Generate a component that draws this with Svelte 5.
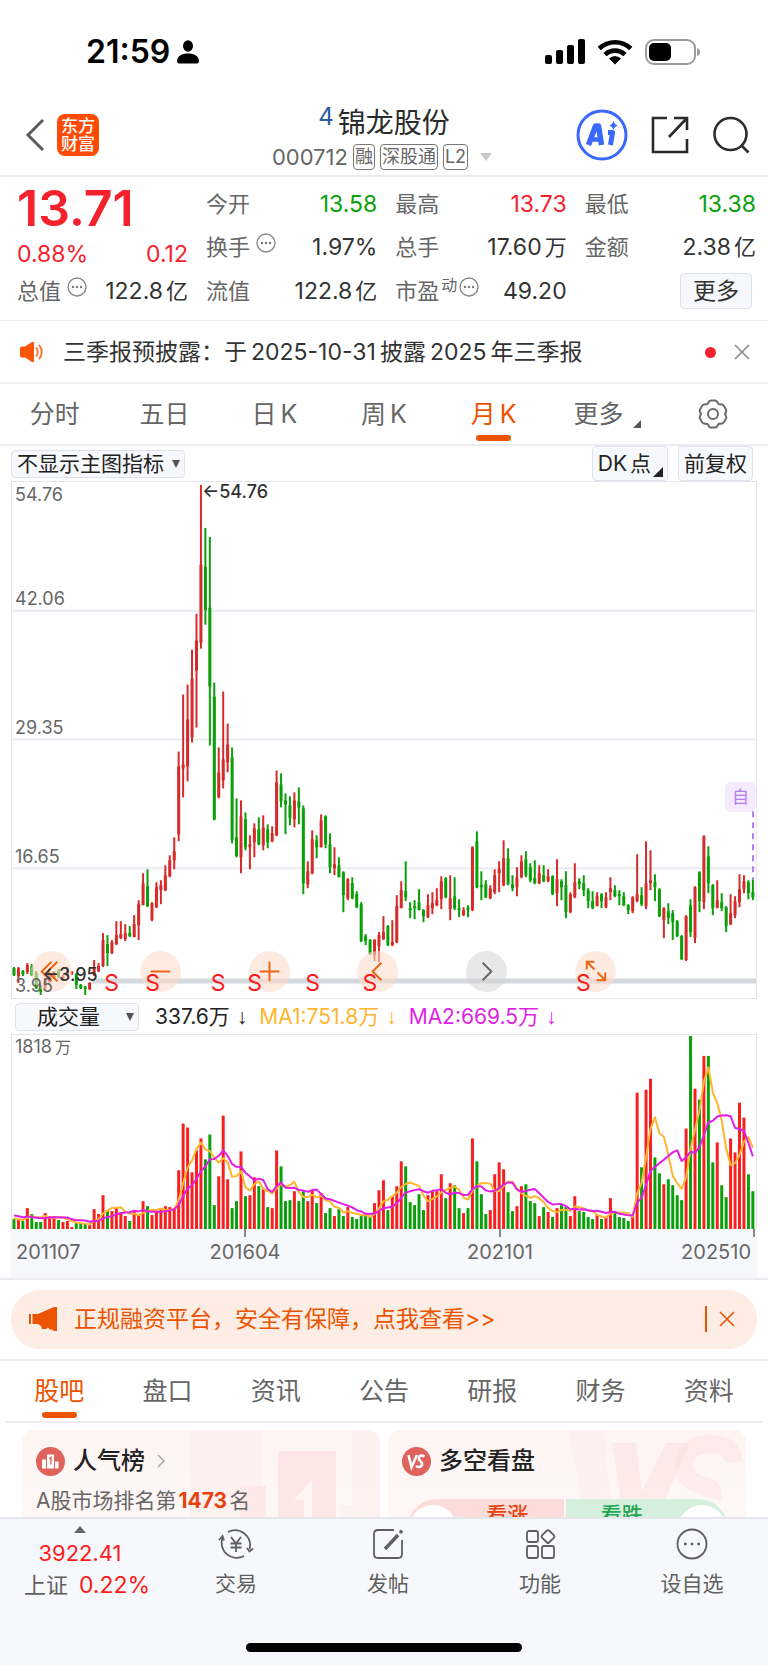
<script>
    /* quote */

    const quotes = [
        { label: '今开', value: '13.58', tone: 'down' },
        { label: '最高', value: '13.73', tone: 'up' },
        { label: '最低', value: '13.38', tone: 'down' },
        { label: '换手', value: '1.97%', tip: true },
        { label: '总手', value: '17.60', unit: '万' },
        { label: '金额', value: '2.38', unit: '亿' },
        { label: '流值', value: '122.8', unit: '亿' },
        { label: '市盈', sup: '动', value: '49.20', tip: true },
    ];

    const periods = ['分时', '五日', '日K', '周K', '月K', '更多'];
    let period = '月K';

    const sections = ['股吧', '盘口', '资讯', '公告', '研报', '财务', '资料'];
    let section = '股吧';

    /* chart data: up, high, low, body top, body bottom, volume */

    const candles = [
        [0,486,495,487,494,10],[1,486,502,487,495,9],[0,489,495,490,493,8],[1,482,493,484,491,21],
        [0,483,495,485,494,15],[0,490,508,492,507,7],[0,504,514,505,511,7],[1,497,508,498,507,16],
        [1,492,502,493,500,13],[1,490,498,491,497,13],[0,488,497,489,496,9],[1,494,500,495,499,7],
        [1,486,495,488,494,8],[1,490,494,491,493,2],[0,492,508,493,504,6],[0,503,508,504,507,6],
        [0,505,514,506,508,5],[1,501,509,502,508,4],[1,479,495,488,494,20],[1,482,491,485,490,15],
        [1,452,486,459,485,34],[0,454,485,463,472,19],[1,459,473,461,472,18],[1,440,464,454,463,21],
        [1,440,458,453,457,17],[1,443,460,452,458,13],[0,445,456,452,455,8],[1,434,456,443,456,18],
        [1,419,459,423,444,14],[1,392,424,402,424,28],[0,388,426,405,425,23],[1,421,440,422,439,14],
        [1,401,427,406,426,17],[1,399,423,404,409,20],[1,384,410,394,409,23],[1,374,396,379,395,22],
        [1,356,388,370,379,20],[1,270,360,285,353,59],[1,213,316,283,287,106],[1,203,300,238,285,102],
        [1,168,261,197,256,57],[1,132,246,159,189,79],[1,3,167,83,161,91],[0,46,143,85,128,70],
        [0,55,264,126,205,95],[0,201,339,215,338,24],[1,266,317,291,316,53],[1,210,307,278,299,114],
        [1,242,291,263,281,50],[0,266,362,276,359,21],[0,317,376,356,375,28],[1,319,392,335,376,78],
        [0,331,369,338,366,33],[1,354,388,363,366,34],[1,342,376,347,361,52],[0,336,364,348,363,43],
        [1,334,369,346,364,40],[0,343,367,348,361,22],[1,345,361,352,360,21],[1,289,355,301,354,79],
        [0,292,326,303,320,63],[0,312,353,319,323,28],[0,315,344,324,337,29],[1,311,346,319,338,38],
        [0,306,343,320,326,28],[0,324,413,327,402,38],[1,380,407,390,403,28],[1,349,393,358,392,39],
        [0,354,377,359,366,26],[1,333,366,339,366,36],[0,334,367,335,363,16],[0,352,392,363,386,21],
        [1,366,394,383,387,13],[0,376,396,384,396,20],[0,390,431,391,414,13],[1,397,419,398,417,22],
        [0,396,418,402,417,12],[0,410,427,413,426,10],[0,421,461,423,460,13],[0,453,464,455,460,13],
        [0,458,474,459,473,13],[1,458,480,459,474,26],[1,451,481,454,465,39],[1,435,459,451,458,49],
        [0,444,465,445,464,19],[1,439,465,461,464,33],[1,414,462,425,461,43],[1,400,427,409,427,68],
        [0,380,420,410,416,63],[0,421,437,427,429,27],[0,419,438,425,427,24],[0,408,429,421,429,35],
        [0,428,441,429,435,19],[1,413,437,424,436,34],[1,411,433,422,427,38],[1,407,425,419,424,38],
        [1,395,428,400,418,55],[0,396,417,397,416,31],[1,394,439,417,428,46],[0,396,429,415,427,44],
        [0,418,436,427,429,21],[1,426,435,429,434,16],[0,424,436,426,429,21],[1,365,430,366,429,91],
        [0,350,407,360,406,68],[0,390,419,404,406,35],[0,399,417,403,416,15],[1,404,418,407,417,19],
        [1,388,413,394,411,55],[1,380,411,388,392,67],[1,359,405,377,404,60],[0,367,404,377,403,37],
        [0,394,410,403,407,18],[1,386,415,396,406,23],[1,374,397,380,396,43],[0,370,396,378,394,45],
        [0,382,401,386,399,28],[0,379,403,397,402,26],[1,384,403,392,402,13],[0,384,401,394,400,22],
        [1,388,401,395,400,17],[0,394,414,395,413,12],[1,378,425,398,412,21],[0,398,419,400,406,24],
        [0,390,437,404,431,22],[1,411,432,413,431,13],[1,382,417,401,416,33],[0,397,408,400,403,18],
        [0,394,415,402,409,17],[0,407,427,409,420,12],[0,410,428,420,427,10],[1,411,425,415,425,14],
        [0,412,427,413,420,10],[1,411,427,416,426,12],[1,396,419,407,411,31],[0,404,416,409,415,17],
        [0,409,424,413,415,12],[0,411,425,415,424,11],[0,423,433,424,429,8],[1,415,432,416,430,13],
        [1,373,421,413,420,137],[0,406,425,414,423,62],[1,360,428,402,425,140],[1,369,409,399,402,151],
        [0,393,420,401,406,72],[0,407,436,408,435,56],[1,426,457,427,439,45],[0,422,443,430,437,50],
        [0,429,459,432,441,44],[0,439,456,440,455,34],[0,454,479,455,478,29],[1,434,480,435,479,101],
        [0,418,456,424,451,194],[1,405,462,406,457,141],[0,390,431,391,420,130],[1,354,428,355,421,174],
        [0,365,412,375,402,174],[0,403,434,404,427,67],[1,399,427,419,427,87],[0,412,430,421,427,44],
        [0,425,451,426,445,32],[1,413,444,432,443,91],[1,415,437,420,434,77],[1,393,426,408,421,127],
        [1,394,412,400,408,112],[0,399,418,401,412,55],[0,398,419,411,416,38],
    ];

    const step = 4.463;
    const xAt = i => 2 + i * step;

    // volumes before the first visible month, only used by the averages
    const earlier = [18, 17, 17, 16, 15, 14, 12, 9, 9];
    const volumes = [...earlier, ...candles.map(c => c[5])];

    const average = days => candles.map((_, i) => {
        const end = i + earlier.length + 1;
        const sum = volumes.slice(end - days, end).reduce((a, b) => a + b, 0);
        return `${xAt(i)},${195 - sum / days}`;
    }).join(' ');

    const ma1 = average(5);
    const ma2 = average(10);

    /* dividend marks along the bottom line, in % of the chart width */

    const marks = [13.4, 18.9, 27.7, 32.6, 40.4, 48.1, 76.8];

    const actions = [
        { label: '交易', icon: 'trade' },
        { label: '发帖', icon: 'post' },
        { label: '功能', icon: 'grid' },
        { label: '设自选', icon: 'dots' },
    ];
</script>

{#snippet tip()}
    <svg class="tip" viewBox="0 0 20 20">
        <circle cx="10" cy="10" r="9" fill="none" stroke="#8a8a8a" stroke-width="1.4" />
        <circle cx="6" cy="10" r="1.2" /><circle cx="10" cy="10" r="1.2" /><circle cx="14" cy="10" r="1.2" />
    </svg>
{/snippet}

{#snippet cross()}
    <svg width="16" height="16" viewBox="0 0 16 16" fill="none" stroke="currentColor" stroke-width="1.6">
        <path d="M1 1L15 15M15 1L1 15" />
    </svg>
{/snippet}

<main>
    <div class="status">
        <div class="time">
            <span>21:59</span>
            <svg width="22" height="24" viewBox="0 0 22 24">
                <ellipse cx="11" cy="6" rx="5" ry="5.8" />
                <path d="M0 21C0 16 5 13.4 11 13.4S22 16 22 21Q22 23.4 20 23.4H2Q0 23.4 0 21Z" />
            </svg>
        </div>
        <div class="signals">
            <svg width="40" height="26" viewBox="0 0 40 26">
                <rect x="0" y="16" width="7" height="9" rx="2" />
                <rect x="11" y="11" width="7" height="14" rx="2" />
                <rect x="22" y="6" width="7" height="19" rx="2" />
                <rect x="33" y="0" width="7" height="25" rx="2" />
            </svg>
            <svg width="36" height="26" viewBox="0 0 36 26">
                <g fill="none" stroke="#000" stroke-width="4.6">
                    <path d="M2.200 9.500A23 23 0 0 1 33.800 9.500" />
                    <path d="M8 15.600A14.500 14.500 0 0 1 28 15.600" />
                </g>
                <path d="M12 19.600Q18 14.600 24 19.600L18 25.400Z" />
            </svg>
            <svg width="56" height="26" viewBox="0 0 56 26">
                <rect x="1" y="1" width="49" height="24" rx="8" fill="none" stroke="#9b9b9b" stroke-width="2" />
                <rect x="4" y="4" width="22" height="18" rx="5" />
                <path d="M52 9Q55 10 55 13T52 17Z" fill="#9b9b9b" />
            </svg>
        </div>
    </div>

    <header>
        <div class="side">
            <button aria-label="返回">
                <svg width="20" height="32" viewBox="0 0 20 32" fill="none" stroke="#5c5c5c" stroke-width="3">
                    <path d="M18 1L3 16L18 31" />
                </svg>
            </button>
            <a href="#home" class="logo"><span>东方</span><span>财富</span></a>
        </div>
        <div class="stock">
            <h1><sup>4</sup>锦龙股份</h1>
            <div class="code">
                <span>000712</span>
                <i>融</i><i>深股通</i><i>L2</i>
                <svg width="12" height="8" viewBox="0 0 12 8"><path d="M0 0H12L6 8Z" fill="#c8c8c8" /></svg>
            </div>
        </div>
        <div class="side tools">
            <button aria-label="AI">
                <svg width="52" height="52" viewBox="0 0 52 52">
                    <circle cx="26" cy="26" r="24" fill="#fff" stroke="#3a68fb" stroke-width="3" />
                    <g fill="none" stroke="#3a68fb" stroke-width="5.500" stroke-linejoin="round">
                        <path d="M12.500 36L19.500 17H22.500L25.500 36" />
                        <path d="M15.500 30.500H25" stroke-width="4.500" />
                        <path d="M32 23.500H36.500L34.500 36" stroke-width="5" />
                    </g>
                    <path d="M37.500 12Q38.300 15.200 41.500 16.500Q38.300 17.800 37.500 21Q36.700 17.800 33.500 16.500Q36.700 15.200 37.500 12Z" fill="#3a68fb" />
                </svg>
            </button>
            <button aria-label="分享">
                <svg width="38" height="38" viewBox="0 0 38 38" fill="none" stroke="#2b2b2b" stroke-width="2.600">
                    <path d="M16 2H2V36H36V23" />
                    <path d="M23 2H36V14M36 2L18 21" />
                </svg>
            </button>
            <button aria-label="搜索">
                <svg width="38" height="38" viewBox="0 0 38 38" fill="none" stroke="#2b2b2b" stroke-width="2.600">
                    <circle cx="18.500" cy="18" r="16" />
                    <path d="M29 29L36.500 36.500" />
                </svg>
            </button>
        </div>
    </header>

    <section class="quote">
        <div class="lead">
            <strong>13.71</strong>
            <p class="up"><span>0.88%</span><span>0.12</span></p>
            <p><span class="name">总值{@render tip()}</span><span>122.8<small>亿</small></span></p>
        </div>
        <div class="cells">
            {#each quotes as q}
                <p>
                    <span class="name">{q.label}{#if q.sup}<sup>{q.sup}</sup>{/if}{#if q.tip}{@render tip()}{/if}</span>
                    <span class={q.tone}>{q.value}{#if q.unit}<small>{q.unit}</small>{/if}</span>
                </p>
            {/each}
            <button class="more">更多</button>
        </div>
    </section>

    <section class="news">
        <svg width="24" height="20" viewBox="0 0 24 20">
            <path d="M0 6Q0 4.500 2 4.500H5L12 0Q14 -.5 14 1V19Q14 20.500 12 20L5 15.500H2Q0 15.500 0 14Z" fill="#fb5607" />
            <path d="M16.500 6Q19 10 16.500 14M19.500 3.500Q24 10 19.500 16.500" fill="none" stroke="#fb7a35" stroke-width="2" stroke-linecap="round" />
        </svg>
        <a href="#news">三季报预披露：于<b>2025-10-31</b>披露<b>2025</b>年三季报</a>
        <i></i>
        <button aria-label="关闭">{@render cross()}</button>
    </section>

    <nav class="periods">
        {#each periods as p}
            <button class:active={p === period} on:click={() => period = p}>
                {#if p.endsWith('K')}{p[0]}<b>K</b>{:else}{p}{/if}
                {#if p === '更多'}
                    <svg width="8" height="8" viewBox="0 0 8 8"><path d="M8 0V8H0Z" fill="#555" /></svg>
                {/if}
            </button>
        {/each}
        <button aria-label="设置">
            <svg width="30" height="30" viewBox="0 0 30 30" fill="none" stroke="#6b6b6b" stroke-width="2" stroke-linejoin="round">
                <path d="M11 2.500Q11.500 1.500 13 1.500H17Q18.500 1.500 19 2.500L20.500 5L24 5.500Q25.300 5.700 26 7L28 10.500Q28.600 11.800 28 13L27 15L28 17Q28.600 18.200 28 19.500L26 23Q25.300 24.300 24 24.500L20.500 25L19 27.500Q18.500 28.500 17 28.500H13Q11.500 28.500 11 27.500L9.500 25L6 24.500Q4.700 24.300 4 23L2 19.500Q1.400 18.200 2 17L3 15L2 13Q1.400 11.800 2 10.500L4 7Q4.700 5.700 6 5.500L9.500 5Z" />
                <circle cx="15" cy="15" r="5" />
            </svg>
        </button>
    </nav>

    <section class="charts">
        <div class="bar">
            <label class="drop">
                <select aria-label="主图指标"><option>不显示主图指标</option></select>
            </label>
            <button class="chip corner">DK<span>点</span></button>
            <button class="chip">前复权</button>
        </div>

        <div class="kline">
            <svg class="plot" viewBox="0 0 746 517" preserveAspectRatio="none">
                <g stroke="#eaecf2" stroke-width="2">
                    <path d="M0 129H746M0 258H746M0 387H746" />
                </g>
                <path d="M80 500H746" stroke="#d5d8dd" stroke-width="5" />
                {#each candles as [up, high, low, top, bottom], i}
                    <g fill={up ? '#d62b2b' : '#0aa00a'}>
                        <rect x={xAt(i) - 1} y={high} width="2" height={low - high} />
                        <rect x={xAt(i) - 1.5} y={top} width="3" height={bottom - top} />
                    </g>
                {/each}
                <path d="M743 330V398" stroke="#b57cf8" stroke-width="2" stroke-dasharray="6 5" />
            </svg>
            <div class="controls">
                <button aria-label="最早">
                    <svg viewBox="0 0 42 42"><path d="M21 11L11 21L21 31M27 11L17 21L27 31" /></svg>
                </button>
                <button aria-label="缩小">
                    <svg viewBox="0 0 42 42"><path d="M11 21H31" /></svg>
                </button>
                <button aria-label="放大">
                    <svg viewBox="0 0 42 42"><path d="M11 21H31M21 11V31" /></svg>
                </button>
                <button aria-label="向前">
                    <svg viewBox="0 0 42 42"><path d="M25 12L16 21L25 30" /></svg>
                </button>
                <button aria-label="向后" class="off">
                    <svg viewBox="0 0 42 42"><path d="M17 12L26 21L17 30" /></svg>
                </button>
                <button aria-label="全屏">
                    <svg viewBox="0 0 42 42"><path d="M12 19V11H20M12 11L20 19M31 22V30H22M31 30L23 22" /></svg>
                </button>
            </div>
            <div class="scale">
                <span>54.76</span><span>42.06</span><span>29.35</span><span>16.65</span><span>3.95</span>
            </div>
            <span class="peak">←54.76</span>
            <span class="floor">←3.95</span>
            <span class="own">自</span>
            {#each marks as left}
                <span class="mark" style="left: {left}%">S</span>
            {/each}
        </div>

        <div class="bar legend">
            <label class="drop wide">
                <select aria-label="副图指标"><option>成交量</option></select>
            </label>
            <span>337.6万<em>↓</em></span>
            <span class="ma1">MA1:751.8万<em>↓</em></span>
            <span class="ma2">MA2:669.5万<em>↓</em></span>
        </div>

        <div class="volume">
            <span>1818<small>万</small></span>
            <svg class="plot" viewBox="0 0 746 195" preserveAspectRatio="none">
                {#each candles as c, i}
                    <rect x={xAt(i) - 1.5} y={195 - c[5]} width="3" height={c[5]} fill={c[0] ? '#f8201f' : '#0aa00a'} />
                {/each}
                <g fill="none" stroke-width="2" stroke-linejoin="round">
                    <polyline points={ma1} stroke="#ffb52e" />
                    <polyline points={ma2} stroke="#e01ee6" />
                </g>
            </svg>
        </div>

        <div class="dates">
            <svg class="plot" viewBox="0 0 746 8" preserveAspectRatio="none">
                <path d="M234 0V8M489 0V8M743 0V8" stroke="#888" stroke-width="2" />
            </svg>
            <p><span>201107</span><span>201604</span><span>202101</span><span>202510</span></p>
        </div>
    </section>

    <section class="promo">
        <div>
            <svg width="28" height="24" viewBox="0 0 28 24" fill="#ec5402">
                <path d="M0 7H2V17H0ZM3.500 7H9L25 0H28V24H25L22.500 22L21 23L19 20.500L17 22H13L12 19L9 17H3.500Z" />
            </svg>
            <a href="#promo">正规融资平台，安全有保障，点我查看&gt;&gt;</a>
            <button aria-label="关闭广告">{@render cross()}</button>
        </div>
    </section>

    <nav class="sections">
        {#each sections as s}
            <button class:active={s === section} on:click={() => section = s}>{s}</button>
        {/each}
    </nav>

    <section class="cards">
        <article>
            <svg class="ghost" viewBox="0 0 190 90" fill="#fbdcda">
                <path d="M0 0H72V56H50V90H0Z" opacity=".2" />
                <path d="M50 56H76V90H50Z" opacity=".5" />
                <path d="M88 21H146V90H88Z" opacity=".6" />
                <path d="M104 70L122 50V90H114V70Z" fill="#fff" opacity=".6" />
                <path d="M162 0H190V90H150V75H162Z" opacity=".2" />
            </svg>
            <h2>
                <svg width="29" height="29" viewBox="0 0 29 29">
                    <circle cx="14.500" cy="14.500" r="14.500" fill="#dd635c" />
                    <path d="M6 12.500H10V21.500H6ZM11 7.500H18V21.500H11ZM19 14.500H22.500V21.500H19Z" fill="#fff" />
                    <path d="M13 12L15 10.500V17.500" fill="none" stroke="#dd635c" stroke-width="1.400" />
                </svg>
                人气榜
                <svg class="go" width="8" height="14" viewBox="0 0 8 14" fill="none" stroke="#aaa" stroke-width="1.600"><path d="M1 1L7 7L1 13" /></svg>
            </h2>
            <p>A股市场排名第<b>1473</b>名</p>
        </article>
        <article>
            <svg class="ghost" viewBox="0 0 190 90" fill="#fbdcda">
                <path d="M12 0H48L56 90H30Z" opacity=".2" />
                <path d="M56 13H80L86 62L110 13H134L100 90H68Z" opacity=".45" />
                <path d="M178 32Q176 14 156 14Q128 14 128 36Q128 52 150 56Q158 58 156 68" fill="none" stroke="#fbdcda" stroke-width="18" opacity=".4" />
            </svg>
            <h2>
                <svg width="29" height="29" viewBox="0 0 29 29">
                    <circle cx="14.500" cy="14.500" r="14.500" fill="#dd635c" />
                    <path d="M6.500 8L9.500 20L15 8M22.500 9.500Q18 7 16.800 11C16.500 14.500 21 14 20 18Q18 21.500 14 19" fill="none" stroke="#fff" stroke-width="2.600" />
                </svg>
                多空看盘
            </h2>
            <div class="vote">
                <button class="bull">看涨</button>
                <button class="bear">看跌</button>
            </div>
        </article>
    </section>

    <footer>
        <div class="dock">
            <a href="#index" class="index">
                <svg width="12" height="7" viewBox="0 0 12 7"><path d="M6 0L12 7H0Z" fill="#666" /></svg>
                <span class="up">3922.41</span>
                <span class="rate">上证<b class="up">0.22%</b></span>
            </a>
            {#each actions as a}
                <button>
                    <svg width="36" height="32" viewBox="0 0 36 32" fill="none" stroke="#5f5f5f" stroke-width="1.800">
                        {#if a.icon === 'trade'}
                            <path d="M10 4A15 15 0 0 1 31.500 21M26 28A15 15 0 0 1 4.500 10" />
                            <path d="M1 12L4.500 8L6 12.500M29 20L31.500 23.500L35 20.500" />
                            <path d="M13 9L18 15.500L23 9M18 15.500V24M12.500 15.500H23.500M12.500 19.500H23.500" />
                        {:else if a.icon === 'post'}
                            <path d="M24 2H8Q4 2 4 6V26Q4 30 8 30H28Q32 30 32 26V12" />
                            <path d="M15 21L28 7M30 5L32 2.500" stroke-width="3.400" />
                        {:else if a.icon === 'grid'}
                            <rect x="5" y="3" width="11" height="11" rx="2" />
                            <rect x="5" y="18" width="11" height="12" rx="2" />
                            <rect x="20" y="18" width="12" height="12" rx="2" />
                            <rect x="21" y="3.500" width="10" height="10" rx="1.500" transform="rotate(45 26 8.500)" />
                        {:else}
                            <circle cx="18" cy="16" r="14.500" />
                            <path d="M10 16H12.600M16.700 16H19.300M23.400 16H26" stroke-width="2.600" />
                        {/if}
                    </svg>
                    {a.label}
                </button>
            {/each}
        </div>
        <div class="home"></div>
    </footer>
</main>

<style>
    :global(body) {
        background: #fff;
    }

    main {
        font-family: Inter, "Noto Sans CJK SC", sans-serif;
        font-size: 22px;
        line-height: 32px;
        color: #333;
        overflow: hidden;
    }

    main * {
        box-sizing: border-box;
    }

    p, h1, h2 {
        margin: 0;
        font-weight: 400;
    }

    b {
        font-weight: 400;
    }

    i, em {
        font-style: normal;
    }

    a {
        color: inherit;
        text-decoration: none;
    }

    button, select {
        font: inherit;
        color: inherit;
        background: none;
        border: none;
        padding: 0;
        margin: 0;
    }

    svg {
        display: block;
        flex: none;
    }

    .up {
        color: #f5222d;
    }

    .down {
        color: #0aa00a;
    }

    /* status bar */

    .status {
        display: flex;
        justify-content: space-between;
        align-items: center;
        padding: 32px 67px 0 86px;
        line-height: 40px;
    }

    .time, .signals {
        display: flex;
        align-items: center;
        gap: 12px;
    }

    .time {
        gap: 7px;
        font-size: 32px;
        font-weight: 600;
        color: #000;
    }

    /* header */

    header {
        display: grid;
        grid-template-columns: 1fr auto 1fr;
        align-items: center;
        padding: 29px 18px 2px;
        border-bottom: 2px solid #ececec;
    }

    .side {
        display: flex;
        align-items: center;
        gap: 12px;
        margin-bottom: 4px;
        padding-left: 7px;
    }

    .tools {
        justify-content: flex-end;
        gap: 23px;
    }

    .logo {
        display: flex;
        flex-direction: column;
        width: 42px;
        padding: 3px 0;
        border-radius: 8px;
        background: #ff4a03;
        color: #fff;
        font-size: 17px;
        font-weight: 500;
        line-height: 18px;
        text-align: center;
    }

    .stock {
        padding-top: 4px;
        text-align: center;
    }

    h1 {
        font-size: 28px;
        line-height: 36px;
        color: #2b2b2b;
    }

    h1 sup {
        font-size: 24px;
        line-height: 24px;
        color: #2c5a9e;
        margin-right: 4px;
        vertical-align: 8px;
    }

    .code {
        display: flex;
        align-items: center;
        gap: 5px;
        padding-right: 4px;
        color: #666;
    }

    .code i {
        border: 1px solid #777;
        border-radius: 4px;
        padding: 0 1px;
        font-size: 18px;
        line-height: 24px;
    }

    .code svg {
        margin-left: 7px;
    }

    /* quote */

    .quote {
        display: grid;
        grid-template-columns: 171fr 550fr;
        gap: 18px;
        padding: 9px 12px 11px 17px;
        border-bottom: 1px solid #ececec;
        font-size: 23px;
    }

    .cells {
        display: grid;
        grid-template-columns: repeat(3, 1fr);
        column-gap: 18px;
        row-gap: 7px;
    }

    .quote p {
        display: flex;
        justify-content: space-between;
        line-height: 36px;
        height: 36px;
    }

    .quote small {
        margin-left: 3px;
        font-size: 22px;
    }

    .name {
        display: flex;
        font-size: 22px;
        color: #666;
    }

    .name sup {
        margin-left: 2px;
        font-size: 16px;
        line-height: 24px;
    }

    .tip {
        width: 20px;
        height: 20px;
        margin: 4px 0 0 6px;
        fill: #777;
    }

    sup + .tip {
        margin-left: 2px;
    }

    .lead strong {
        display: block;
        margin-bottom: 6px;
        font-size: 50px;
        line-height: 44px;
        font-weight: 600;
        color: #f5222d;
    }

    .lead p + p {
        margin-top: 1px;
    }

    .more {
        justify-self: end;
        margin-right: 4px;
        padding: 0 12px;
        height: 36px;
        border: 1px solid #dfe2e8;
        border-radius: 4px;
        background: #f7f8fb;
        line-height: 32px;
    }

    /* news */

    .news {
        display: flex;
        align-items: center;
        padding: 15px 18px 14px 20px;
        border-bottom: 2px solid #f2f2f2;
        font-size: 23px;
    }

    .news a {
        flex: 1;
        margin-left: 19px;
    }

    .news b {
        margin: 0 4px;
    }

    .news i {
        width: 11px;
        height: 11px;
        border-radius: 50%;
        background: #f5222d;
        margin-right: 18px;
    }

    .news button {
        color: #888;
    }

    /* tabs */

    .periods, .sections {
        display: grid;
        grid-template-columns: repeat(7, 1fr);
        font-size: 25px;
        line-height: 36px;
        color: #666;
        border-bottom: 2px solid #ececf2;
    }

    .periods button, .sections button {
        position: relative;
        display: flex;
        justify-content: center;
        align-items: center;
        padding: 12px 0;
    }

    .periods b {
        margin-left: 4px;
    }

    .periods button:nth-child(6) {
        padding-left: 8px;
    }

    .periods button:nth-child(6) svg {
        align-self: flex-end;
        margin: 0 0 4px 10px;
    }

    .periods .active, .sections .active {
        color: #ec5402;
    }

    .active::after {
        content: "";
        position: absolute;
        bottom: 3px;
        width: 35px;
        height: 6px;
        border-radius: 3px;
        background: #ec5402;
    }

    /* charts */

    .charts {
        padding: 0 11px;
        border-bottom: 2px solid #ececf0;
    }

    .bar {
        display: flex;
        align-items: center;
        gap: 10px;
        height: 35px;
        padding-right: 4px;
        font-size: 21px;
        color: #222;
    }

    .drop {
        display: flex;
        align-items: center;
        margin-right: auto;
        position: relative;
    }

    .drop::after {
        content: "";
        position: absolute;
        right: 5px;
        border: 4px solid transparent;
        border-top: 8px solid #555;
        border-bottom: none;
        pointer-events: none;
    }

    select {
        appearance: none;
        padding: 0 20px 0 5px;
        height: 28px;
        border: 1px solid #dfe2e8;
        border-radius: 4px;
        background: #f7f8fb;
        line-height: 26px;
    }

    .wide select {
        width: 124px;
        padding-left: 21px;
    }

    .chip {
        position: relative;
        height: 35px;
        padding: 0 5px;
        border: 1px solid #dfe2e8;
        border-radius: 4px;
        background: #f7f8fb;
    }

    .corner {
        padding-right: 16px;
    }

    .corner span {
        margin-left: 3px;
    }

    .corner::after {
        content: "";
        position: absolute;
        right: 4px;
        bottom: 3px;
        border: 5px solid #222;
        border-top-color: transparent;
        border-left-color: transparent;
    }

    .plot {
        display: block;
        width: 100%;
        height: 100%;
    }

    .kline {
        position: relative;
        height: 518px;
        border: 1px solid #e4e6ec;
    }

    .scale {
        position: absolute;
        top: 0;
        left: 3px;
        bottom: 0;
        display: grid;
        grid-template-rows: 25px 104px 129px 129px 1fr;
        align-items: end;
        font-size: 18px;
        line-height: 24px;
        color: #666;
    }

    .peak, .floor {
        position: absolute;
        font-size: 18px;
        line-height: 24px;
        font-weight: 500;
        color: #333;
    }

    .peak {
        top: -2px;
        left: 190px;
    }

    .floor {
        bottom: 11px;
        left: 30px;
    }

    .own {
        position: absolute;
        right: 0;
        top: 300px;
        width: 31px;
        border-radius: 6px;
        background: #f4ecfe;
        color: #b57cf8;
        font-size: 17px;
        line-height: 30px;
        text-align: center;
    }

    .controls {
        position: absolute;
        left: 19px;
        right: 140px;
        bottom: 6px;
        display: flex;
        justify-content: space-between;
    }

    .controls button {
        width: 41px;
        height: 41px;
        border-radius: 50%;
        background: rgba(252, 222, 205, 0.6);
    }

    .controls svg {
        fill: none;
        stroke: #ee6410;
        stroke-width: 2;
    }

    .controls .off {
        background: rgba(210, 210, 210, 0.5);
    }

    .controls .off svg {
        stroke: #666;
    }

    .mark {
        position: absolute;
        bottom: 0;
        width: 20px;
        margin-left: -10px;
        text-align: center;
        font-size: 23px;
        line-height: 30px;
        color: #fb1d1d;
    }

    .legend {
        gap: 12px;
        padding-left: 4px;
    }

    .legend .drop {
        margin-right: 4px;
    }

    .legend em {
        margin-left: 7px;
        font-family: "Liberation Sans", sans-serif;
    }

    .ma1 {
        color: #ffb52e;
    }

    .ma2 {
        color: #e01ee6;
    }

    .volume {
        position: relative;
        height: 195px;
        border: 1px solid #e4e6ec;
        border-bottom: none;
    }

    .volume span {
        position: absolute;
        left: 3px;
        top: 0;
        font-size: 18px;
        line-height: 24px;
        color: #666;
    }

    .volume small {
        font-size: 16px;
        margin-left: 3px;
    }

    .dates {
        background: #f7f8fb;
        padding-bottom: 11px;
        color: #666;
        font-size: 20px;
        line-height: 30px;
    }

    .dates .plot {
        height: 8px;
    }

    .dates p {
        display: grid;
        grid-template-columns: 160fr 148fr 362fr 76fr;
        text-align: center;
    }

    .dates span:first-child {
        padding-left: 5px;
        text-align: left;
    }

    .dates span:last-child {
        padding-right: 6px;
        text-align: right;
    }

    /* promo */

    .promo {
        padding: 10px 11px;
        border-bottom: 2px solid #ececec;
    }

    .promo div {
        display: flex;
        align-items: center;
        padding: 16px 22px 17px 18px;
        border-radius: 29px;
        background: #fdede4;
        color: #ec5402;
        font-size: 23px;
        line-height: 26px;
    }

    .promo a {
        flex: 1;
        margin-left: 17px;
    }

    .promo button {
        padding-left: 12px;
        border-left: 2px solid #ec5402;
        height: 26px;
    }

    /* sections */

    .sections {
        margin: 0 5px;
    }

    /* cards */

    .cards {
        display: grid;
        grid-template-columns: 1fr 1fr;
        gap: 8px;
        height: 94px;
        padding: 7px 22px 0;
        overflow: hidden;
    }

    article {
        position: relative;
        height: 160px;
        padding: 13px 14px;
        border-radius: 12px;
        background: linear-gradient(#fef5f3, #fffaf8);
        overflow: hidden;
    }

    .ghost {
        position: absolute;
        top: 0;
        right: 0;
        width: 190px;
        height: 90px;
    }

    h2 {
        position: relative;
        display: flex;
        align-items: center;
        gap: 8px;
        font-size: 24px;
        font-weight: 500;
        line-height: 36px;
        color: #222;
    }

    .go {
        margin-left: 4px;
    }

    article p {
        position: relative;
        margin-top: 6px;
        font-size: 21px;
        color: #666;
    }

    article p b {
        margin: 0 2px;
        font-weight: 700;
        color: #e8430f;
    }

    .vote {
        position: relative;
        display: flex;
        gap: 2px;
        margin: 20px 4px 0 5px;
        border-radius: 32px;
        overflow: hidden;
    }

    .vote button {
        position: relative;
        flex: 1;
        height: 60px;
        font-size: 21px;
        font-weight: 500;
        line-height: 30px;
    }

    .vote button::after {
        content: "";
        position: absolute;
        top: 6px;
        left: 2px;
        width: 48px;
        height: 48px;
        border-radius: 50%;
        background: #fff;
    }

    .vote .bull {
        padding: 0 0 28px 44px;
        background: #fcdcd9;
        color: #e8430f;
    }

    .vote .bear {
        padding: 0 50px 28px 0;
        background: #d5efdd;
        color: #24a553;
    }

    .vote .bear::after {
        left: auto;
        right: 2px;
    }

    /* footer */

    footer {
        background: #f7f8fb;
        border-top: 2px solid #e4e6ec;
        padding-bottom: 15px;
    }

    .dock {
        display: grid;
        grid-template-columns: 160fr 152fr 152fr 152fr 152fr;
        font-size: 21px;
        color: #5f5f5f;
    }

    .dock button, .index {
        display: flex;
        flex-direction: column;
        align-items: center;
        padding-top: 9px;
    }

    .dock button svg {
        margin-bottom: 8px;
    }

    .index {
        padding-top: 7px;
        font-size: 22px;
    }

    .index .up {
        color: #fb1d1d;
    }

    .index svg {
        margin-bottom: 4px;
    }

    .rate {
        display: flex;
        gap: 11px;
        padding-left: 14px;
    }

    .rate b {
        font-size: 23px;
    }

    .home {
        width: 36%;
        height: 9px;
        margin: 42px auto 0;
        border-radius: 5px;
        background: #000;
    }
</style>
